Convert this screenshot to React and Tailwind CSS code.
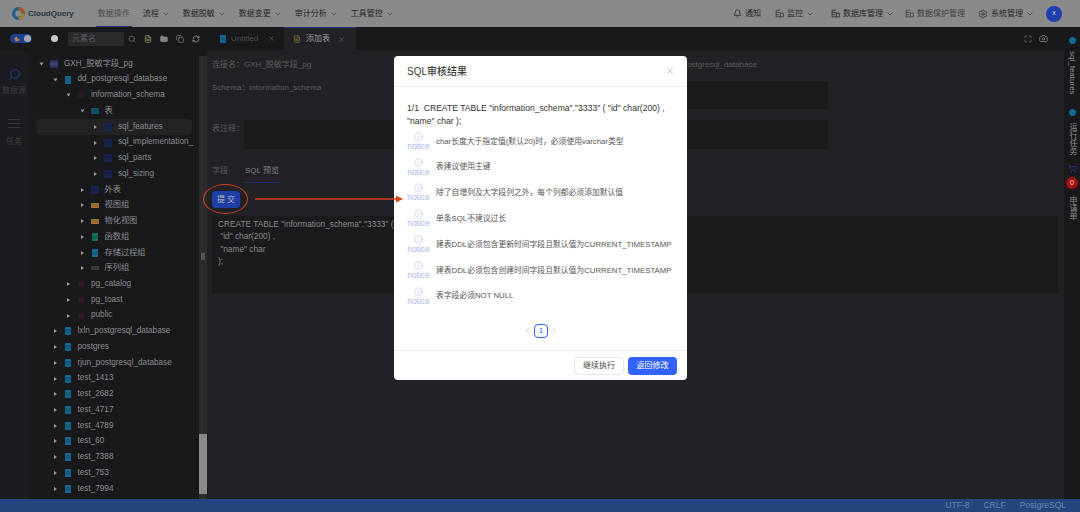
import React from 'react';
import { Bell, ChevronDown, ChevronLeft, ChevronRight, Info, X, Search, Settings, ShoppingCart, FileText, Folder, Copy, RefreshCw, Maximize, Camera, Moon } from 'lucide-react';

const font = "font-['Liberation_Sans','Noto_Sans_CJK_SC',sans-serif]";

const navLeft = [
  { label: '流程', w: 'w-[26px]' },
  { label: '数据脱敏', w: 'w-[42px]' },
  { label: '数据变更', w: 'w-[42px]' },
  { label: '审计分析', w: 'w-[42px]' },
  { label: '工具管控', w: 'w-[42px]' },
];

const tree = [
  { d: 0, label: 'GXH_脱敏字段_pg', icon: 'conn', open: true },
  { d: 1, label: 'dd_postgresql_database', icon: 'db', open: true },
  { d: 2, label: 'information_schema', icon: 'schema', open: true },
  { d: 3, label: '表', icon: 'group', open: true },
  { d: 4, label: 'sql_features', icon: 'table', active: true },
  { d: 4, label: 'sql_implementation_', icon: 'table' },
  { d: 4, label: 'sql_parts', icon: 'table' },
  { d: 4, label: 'sql_sizing', icon: 'table' },
  { d: 3, label: '外表', icon: 'table' },
  { d: 3, label: '视图组', icon: 'view' },
  { d: 3, label: '物化视图', icon: 'view' },
  { d: 3, label: '函数组', icon: 'fn' },
  { d: 3, label: '存储过程组', icon: 'proc' },
  { d: 3, label: '序列组', icon: 'seq' },
  { d: 2, label: 'pg_catalog', icon: 'schema' },
  { d: 2, label: 'pg_toast', icon: 'schema' },
  { d: 2, label: 'public', icon: 'schema' },
  ...['lxln_postgresql_database', 'postgres', 'rjun_postgresql_database', 'test_1413', 'test_2682', 'test_4717', 'test_4789', 'test_60', 'test_7388', 'test_753', 'test_7994'].map((label) => ({ d: 1, label, icon: 'db' })),
];

const notices = [
  'char长度大于指定值(默认20)时，必须使用varchar类型',
  '表建议使用主键',
  '除了自增列及大字段列之外，每个列都必须添加默认值',
  '单条SQL不建议过长',
  '建表DDL必须包含更新时间字段且默认值为CURRENT_TIMESTAMP',
  '建表DDL必须包含创建时间字段且默认值为CURRENT_TIMESTAMP',
  '表字段必须NOT NULL',
];

// small filled blocks, the tree icons are barely readable under the mask
function TreeIcon({ type }) {
  const styles = {
    conn: { x: 0, y: 0, w: 8, h: 8, fill: '#2a2d5e', line: '#5a5f99' },
    db: { x: 1, y: 0, w: 6, h: 8, fill: '#0e6a93', line: '#0a4a68' },
    schema: { x: 1, y: 1, w: 6, h: 6, fill: '#2a1820', line: '#34202a' },
    group: { x: 0, y: 1, w: 8, h: 6, fill: '#14566f', line: '#0f3a4c' },
    table: { x: 0, y: 0, w: 8, h: 8, fill: '#1a2450', line: '#141b3e' },
    view: { x: 0, y: 2, w: 8, h: 5, fill: '#a87b35', line: '#7d5a26' },
    fn: { x: 1, y: 0, w: 6, h: 8, fill: '#12705a', line: '#0c4d3e' },
    proc: { x: 1, y: 0, w: 6, h: 8, fill: '#176a92', line: '#104b69' },
    seq: { x: 0, y: 1, w: 8, h: 6, fill: '#19191b', line: '#77777a' },
  };
  const s = styles[type];
  return (
    <svg width="8" height="8" viewBox="0 0 8 8">
      <rect x={s.x} y={s.y} width={s.w} height={s.h} rx="0.8" fill={s.fill} />
      <path d={`M${s.x} 3H${s.x + s.w}M${s.x} 5H${s.x + s.w}`} stroke={s.line} strokeWidth="0.7" />
    </svg>
  );
}

function TreeRow({ item }) {
  return (
    <div
      className={`h-[15.74px] flex items-center rounded-sm ${item.active ? 'bg-[#232326]' : ''}`}
      style={{ paddingLeft: 4 + item.d * 13.5 }}
    >
      <span
        className={`w-0 h-0 border-y-[2px] border-y-transparent border-l-[3px] border-l-[#99999b] ${item.open ? 'rotate-90' : ''}`}
      />
      <span className="ml-[6px] w-[10px] shrink-0 flex justify-center">
        <TreeIcon type={item.icon} />
      </span>
      <span className="ml-[5px] text-[8.2px] text-[#8c8c8e] whitespace-nowrap">{item.label}</span>
    </div>
  );
}

function NoticeRow({ text }) {
  return (
    <div className="h-[25.8px] flex items-center">
      <div className="w-[23px] shrink-0 flex flex-col items-center text-[#a9b9f2]">
        <Info size={9} strokeWidth={1.4} />
        <span className="text-[8.5px] leading-[11px]">notice</span>
      </div>
      <span className="ml-[6px] -mt-[1px] text-[7.8px] text-[#555] whitespace-nowrap">{text}</span>
    </div>
  );
}

function HeaderIcon() {
  return (
    <svg width="9" height="9" viewBox="0 0 12 12" fill="none" stroke="currentColor" strokeWidth="1">
      <path d="M7 1.5H1.5v9H7M1.5 4.5H7M1.5 7.5H5" />
      <rect x="7" y="5.5" width="4" height="5" />
    </svg>
  );
}

export default function App() {
  return (
    <div className={`relative w-[1080px] h-[512px] overflow-hidden flex flex-col bg-[#222226] ${font}`}>
      {/* header */}
      <header className="h-[27px] shrink-0 bg-[#8a8a8a] flex items-center pl-[12px] pr-[18px] text-[8px] text-[#262626]">
        <svg width="13" height="13" viewBox="0 0 24 24" className="shrink-0">
          <circle cx="12" cy="12" r="9" fill="none" stroke="#1d5f8a" strokeWidth="6" />
          <path d="M12 3a9 9 0 0 1 9 9" fill="none" stroke="#a5571f" strokeWidth="6" />
          <path d="M21 12a9 9 0 0 1-9 9" fill="none" stroke="#a8812a" strokeWidth="6" />
        </svg>
        <span className="ml-[3px] font-bold text-[#2b3440]">CloudQuery</span>
        <div className="relative ml-[22px] h-full w-[36px] flex items-center justify-center text-[#4a4a4a] whitespace-nowrap">
          数据操作
          <span className="absolute left-0 right-0 bottom-0 h-[1px] bg-[#28306b]" />
        </div>
        <div className="ml-[11px] flex gap-[14px]">
          {navLeft.map((n) => (
            <div key={n.label} className={`${n.w} flex items-center gap-[3px] whitespace-nowrap`}>
              {n.label}
              <ChevronDown size={8} className="text-[#3f3f3f] shrink-0" />
            </div>
          ))}
        </div>
        <div className="ml-auto flex items-center gap-[3px] whitespace-nowrap">
          <Bell size={9} />
          通知
        </div>
        <div className="ml-[14px] flex items-center gap-[3px] text-[#303030] whitespace-nowrap">
          <HeaderIcon />
          监控
          <ChevronDown size={8} />
        </div>
        <div className="ml-[17px] flex items-center gap-[3px] whitespace-nowrap">
          <HeaderIcon />
          数据库管理
          <ChevronDown size={8} />
        </div>
        <div className="ml-[11px] flex items-center gap-[3px] text-[#404040] whitespace-nowrap">
          <HeaderIcon />
          数据保护管理
        </div>
        <div className="ml-[13px] flex items-center gap-[3px] whitespace-nowrap">
          <Settings size={10} strokeWidth={1.5} />
          系统管理
          <ChevronDown size={8} />
        </div>
        <span className="ml-[12px] w-[16px] h-[16px] rounded-full bg-[#1f3fb0] flex items-center justify-center text-[7px] text-[#d5d5d5]">x</span>
      </header>

      <div className="flex-1 min-h-0 flex">
        {/* left side */}
        <aside className="w-[207px] shrink-0 flex flex-col">
          <div className="h-[23px] shrink-0 bg-[#19191b] flex items-center pl-[10px]">
            <span className="w-[22px] h-[9px] rounded-full bg-[#1e3f8f] flex items-center justify-between px-[1px]">
              <Moon size={6} className="ml-[3px] text-[#b08a3c]" fill="#b08a3c" />
              <span className="w-[7px] h-[7px] rounded-full bg-[#a9a9ab]" />
            </span>
            <span className="ml-[19px] w-[7px] h-[7px] rounded-full bg-[#c9c9cb]" />
            <span className="ml-[10px] w-[56px] h-[14px] bg-[#2a2a2d] pl-[4px] text-[8px] leading-[14px] text-[#5f5f62]">元素名</span>
            <Search size={8} className="ml-[4px] text-[#77777a]" />
            <FileText size={8} className="ml-[8px] text-[#a89f6a]" />
            <Folder size={8} className="ml-[8px] text-[#87878a]" fill="#87878a" />
            <Copy size={8} className="ml-[8px] text-[#87878a]" />
            <RefreshCw size={8} className="ml-[8px] text-[#a0a0a2]" />
          </div>
          <div className="flex-1 min-h-0 flex">
            <div className="w-[28px] shrink-0 bg-[#1c1c20] flex flex-col items-center pt-[18px] text-[8px] text-[#3e3e42]">
              <Search size={13} strokeWidth={1.8} className="text-[#1d3f8c] -scale-x-100" />
              <span className="mt-[5px] leading-[10px] whitespace-nowrap">数据源</span>
              <svg className="mt-[22px] text-[#3e3e42]" width="12" height="11" viewBox="0 0 12 11" stroke="currentColor" strokeWidth="0.8">
                <path d="M0 1.5h12M0 5.5h12M0 9.5h12" />
              </svg>
              <span className="mt-[8px] leading-[10px]">任务</span>
            </div>
            <div className="flex-1 min-w-0 bg-[#19191b] pl-[8px] pr-[7px] pt-[6px] overflow-hidden">
              {tree.map((item) => (
                <TreeRow key={item.label} item={item} />
              ))}
            </div>
            <div className="w-[8px] shrink-0 bg-[#19191b] pt-[6px]">
              <div className="h-full bg-[#2c2c2f] flex flex-col justify-end pb-[5px]">
                <div className="h-[60px] bg-[#8a8a8c]" />
              </div>
            </div>
          </div>
        </aside>

        {/* main */}
        <main className="flex-1 min-w-0 flex flex-col">
          <div className="h-[23px] shrink-0 bg-[#19191b] flex items-stretch pl-[3px] pr-[16px]">
            <div className="w-[74px] flex items-center pl-[9px] text-[8px] text-[#4f4f52]">
              <TreeIcon type="db" />
              <span className="ml-[4px]">Untitled</span>
              <X size={7} className="ml-[10px] text-[#6a6a6d]" />
            </div>
            <div className="w-[72px] bg-[#222226] border-t border-[#2c3270] flex items-center pl-[9px] text-[8px] text-[#9a9a9c]">
              <FileText size={8} className="text-[#8a7a30]" />
              <span className="ml-[5px]">添加表</span>
              <X size={7} className="ml-[8px] text-[#6a6a6d]" />
            </div>
            <div className="ml-auto flex items-center gap-[7px] text-[#88888a]">
              <Maximize size={8} />
              <Camera size={9} />
            </div>
          </div>

          <div className="relative flex-1 min-h-0 pl-[5px] pr-[6px] pt-[8px] text-[8px] text-[#5c5c5f]">
            <div className="flex h-[14px] items-center justify-between pr-[301px]">
              <span>连接名：GXH_脱敏字段_pg</span>
              <span>数据库：dd_postgresql_database</span>
            </div>
            <div className="flex mt-[9px] h-[14px] items-center">
              <span>Schema：information_schema</span>
              <div className="ml-auto mr-[230px] w-[200px] h-[28px] -mb-[14px] bg-[#1b1b1d]" />
            </div>
            <div className="flex mt-[25px] items-start">
              <span className="w-[32px] pt-[3px] whitespace-nowrap">表注释：</span>
              <div className="w-[584px] h-[29px] bg-[#1b1b1d]" />
            </div>
            <div className="flex mt-[16px] h-[18px] gap-[17px]">
              <span>字段</span>
              <span className="h-full text-[#7f7f82] border-b border-[#1d2f66] w-[35px] whitespace-nowrap">SQL 预览</span>
            </div>
            <button className="block mt-[8px] w-[28px] h-[17px] bg-[#1f3fa6] rounded-sm text-[8px] text-[#b9b9bb]">提 交</button>
            <div className="mt-[8px] h-[78px] bg-[#1b1b1d] pl-[6px] pt-[2px] text-[8.3px] leading-[12.3px] text-[#8a8a8c]">
              <div>CREATE TABLE "information_schema"."3333" (</div>
              <div>&nbsp;"id" char(200) ,</div>
              <div>&nbsp;"name" char</div>
              <div>);</div>
            </div>
          </div>
        </main>

        {/* right rail */}
        <aside className="w-[16px] shrink-0 bg-[#19191b] flex flex-col items-center pt-[10px] text-[8px] leading-[10px] text-[#8f8f91]">
          <span className="w-[7px] h-[7px] shrink-0 rounded-full bg-[#0e6a93]" />
          <span className="mt-[7px] [writing-mode:vertical-rl]">sql_features</span>
          <span className="mt-[14px] w-[7px] h-[7px] shrink-0 rounded-full bg-[#0e6a93]" />
          <span className="mt-[7px] [writing-mode:vertical-rl] [text-orientation:upright]">运行任务</span>
          <ShoppingCart size={9} className="mt-[9px] shrink-0 text-[#1d3f8c]" />
          <span className="mt-[4px] w-[12px] h-[12px] shrink-0 rounded-full bg-[#a80f0f] text-center text-[7.5px] leading-[12px] text-[#d5d5d5]">0</span>
          <span className="mt-[7px] [writing-mode:vertical-rl] [text-orientation:upright]">申请单</span>
        </aside>
      </div>

      <footer className="h-[13px] shrink-0 bg-[#23467f] flex items-center justify-end pr-[14px] gap-[14px] text-[8.5px] text-[#6f86ad]">
        <span>UTF-8</span>
        <span>CRLF</span>
        <span>PostgreSQL</span>
      </footer>

      {/* resize handle */}
      <span className="absolute left-[201px] top-[253px] w-[4px] h-[7px] bg-[radial-gradient(#58585b_0.7px,transparent_0.8px)] bg-[length:2px_2px]" />

      {/* modal */}
      <div className="absolute left-[394px] top-[56px] w-[293px] h-[324px] bg-white rounded-sm flex flex-col text-[#333]">
        <div className="h-[31px] shrink-0 border-b border-[#f0f0f0] flex items-center justify-between pl-[13px] pr-[12px]">
          <span className="text-[10px] font-medium text-[#3a3a3a]">SQL审核结果</span>
          <X size={10} strokeWidth={1.2} className="text-[#8c8c8c]" />
        </div>
        <div className="flex-1 min-h-0 pl-[13px] pr-[12px] pt-[15px]">
          <p className="text-[8.6px] leading-[12.5px] text-[#333] font-medium">
            1/1&nbsp; CREATE TABLE "information_schema"."3333" ( "id" char(200) , "name" char );
          </p>
          <div className="mt-[2px]">
            {notices.map((t) => (
              <NoticeRow key={t} text={t} />
            ))}
          </div>
          <div className="mt-[14px] flex items-center justify-center gap-[2px] text-[#c4c4c4]">
            <ChevronLeft size={9} />
            <span className="w-[14px] h-[14px] border border-[#3262ff] rounded-sm text-center text-[8px] leading-[12px] text-[#3262ff]">1</span>
            <ChevronRight size={9} />
          </div>
        </div>
        <div className="h-[30px] shrink-0 border-t border-[#f0f0f0] flex items-center justify-end gap-[4px] pr-[10px]">
          <button className="w-[50px] h-[18px] border border-[#e8e8e8] rounded-sm bg-white text-[8px] text-[#444]">继续执行</button>
          <button className="w-[49px] h-[18px] rounded-sm bg-[#3262ff] text-[8px] text-white">返回修改</button>
        </div>
      </div>

      {/* annotation */}
      <span className="absolute left-[203px] top-[184px] w-[45px] h-[30px] rounded-[50%] border-[1.5px] border-[#d8401f]" />
      <svg className="absolute left-[255px] top-[193px]" width="150" height="12" viewBox="0 0 150 12">
        <path d="M0 6H143" stroke="#d8401f" strokeWidth="1.3" />
        <path d="M141 2.5L148 6L141 9.5Z" fill="#e0401a" />
      </svg>
    </div>
  );
}
